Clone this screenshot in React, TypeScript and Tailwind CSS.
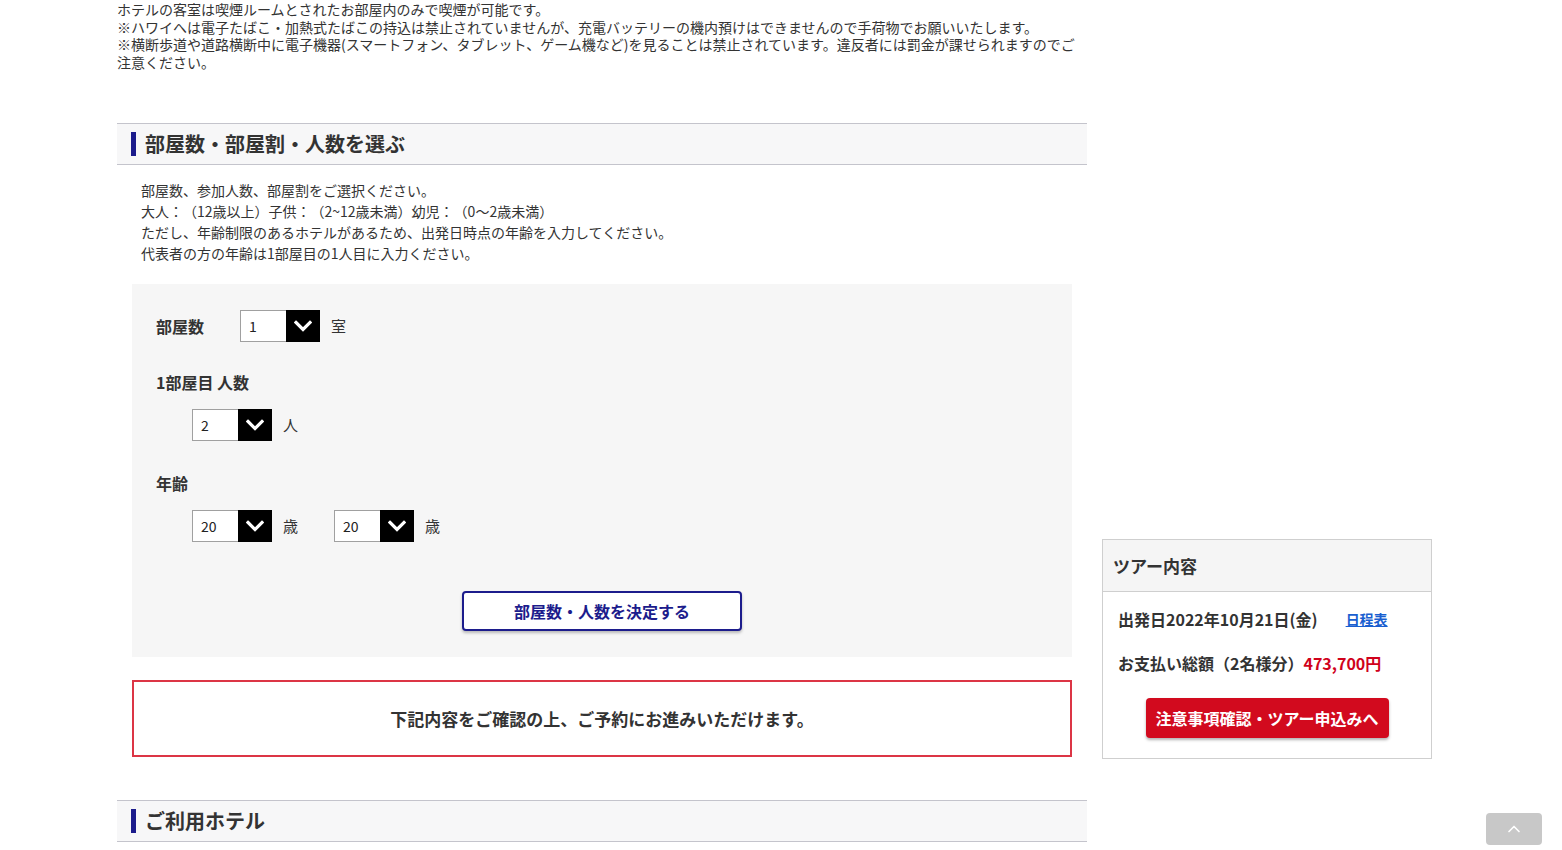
import { ChevronUp } from "lucide-react";

const font = { fontFamily: '"Noto Sans CJK JP", "Noto Sans", sans-serif' };

function Chevron() {
  return (
    <svg width="18" height="12" viewBox="0 0 18 12" fill="none">
      <path d="M2 2.5l7 7 7-7" stroke="#fff" strokeWidth="3.2" strokeLinecap="square" />
    </svg>
  );
}

function Select({ value }: { value: string }) {
  return (
    <div className="flex h-[32px] w-[80px]">
      <div className="flex flex-1 items-center border border-r-0 border-[#a0a0a0] bg-white pl-[8px] text-[14px] text-[#222]">
        {value}
      </div>
      <div className="flex w-[34px] items-center justify-center bg-black">
        <Chevron />
      </div>
    </div>
  );
}

function SectionHeader({ title }: { title: string }) {
  return (
    <div className="flex h-[42px] items-center border-y border-[#c4c4cc] bg-[#f7f7f8] pl-[14px]">
      <span className="mr-[9px] h-[24px] w-[5px] bg-[#1c1c8c]" />
      <h2 className="text-[20px] font-bold text-[#333]">{title}</h2>
    </div>
  );
}

export default function App() {
  return (
    <div
      style={font}
      className="relative h-[850px] overflow-hidden bg-white text-[#333] [text-spacing-trim:space-all]"
    >
      <div className="ml-[117px] flex items-start gap-[15px]">
        <main className="w-[970px]">
          <div className="pt-[1px] text-[14px] leading-[17.5px]">
            <p>ホテルの客室は喫煙ルームとされたお部屋内のみで喫煙が可能です。</p>
            <p>※ハワイへは電子たばこ・加熱式たばこの持込は禁止されていませんが、充電バッテリーの機内預けはできませんので手荷物でお願いいたします。</p>
            <p>※横断歩道や道路横断中に電子機器(スマートフォン、タブレット、ゲーム機など)を見ることは禁止されています。違反者には罰金が課せられますのでご注意ください。</p>
          </div>

          <div className="mt-[52px]">
            <SectionHeader title="部屋数・部屋割・人数を選ぶ" />
          </div>

          <div className="mt-[15px] pl-[24px] text-[14px] leading-[21px]">
            <p>部屋数、参加人数、部屋割をご選択ください。</p>
            <p>大人：（12歳以上）子供：（2~12歳未満）幼児：（0〜2歳未満）</p>
            <p>ただし、年齢制限のあるホテルがあるため、出発日時点の年齢を入力してください。</p>
            <p>代表者の方の年齢は1部屋目の1人目に入力ください。</p>
          </div>

          <div className="mx-[15px] mt-[20px] bg-[#f6f6f6] px-[24px] pb-[26px] pt-[26px]">
            <div className="flex items-center">
              <span className="w-[84px] text-[16px] font-bold">部屋数</span>
              <Select value="1" />
              <span className="ml-[11px] text-[15px]">室</span>
            </div>

            <p className="mt-[29px] text-[16px] font-bold leading-[22px]">1部屋目 人数</p>
            <div className="ml-[36px] mt-[16px] flex items-center">
              <Select value="2" />
              <span className="ml-[11px] text-[15px]">人</span>
            </div>

            <p className="mt-[31px] text-[16px] font-bold leading-[22px]">年齢</p>
            <div className="ml-[36px] mt-[16px] flex items-center gap-[11px]">
              <Select value="20" />
              <span className="mr-[25px] text-[15px]">歳</span>
              <Select value="20" />
              <span className="text-[15px]">歳</span>
            </div>

            <div className="mt-[49px] flex justify-center">
              <button className="h-[40px] w-[280px] rounded-[4px] border-2 border-[#1c1c8c] bg-white text-[16px] font-bold text-[#1c1c8c] shadow-[0_2px_3px_rgba(0,0,0,0.25)]">
                部屋数・人数を決定する
              </button>
            </div>
          </div>

          <div className="mx-[15px] mt-[23px] flex h-[77px] items-center justify-center border-2 border-[#dc3545] text-[17px] font-bold">
            下記内容をご確認の上、ご予約にお進みいただけます。
          </div>

          <div className="mt-[43px]">
            <SectionHeader title="ご利用ホテル" />
          </div>
        </main>

        <aside className="mt-[539px] w-[330px] border border-[#cfcfcf]">
          <div className="flex h-[52px] items-center border-b border-[#cfcfcf] bg-[#f5f5f5] pl-[10px] text-[17px] font-bold">
            ツアー内容
          </div>
          <div className="px-[15px] pb-[20px] pt-[15px]">
            <div className="flex items-center text-[16px] font-bold leading-[24px]">
              <span>出発日2022年10月21日(金)</span>
              <a className="ml-[28px] text-[14px] text-[#1a5fd0] underline">日程表</a>
            </div>
            <p className="mt-[20px] text-[16px] font-bold leading-[24px]">
              お支払い総額（2名様分）<span className="text-[#d0021b]">473,700円</span>
            </p>
            <div className="mt-[23px] flex justify-center">
              <button className="h-[40px] w-[243px] rounded-[4px] bg-[#d20a1e] text-[16px] font-bold text-white shadow-[0_2px_3px_rgba(0,0,0,0.3)]">
                注意事項確認・ツアー申込みへ
              </button>
            </div>
          </div>
        </aside>
      </div>

      <div className="absolute left-[1486px] top-[813px] flex h-[32px] w-[56px] items-center justify-center rounded-[4px] bg-[#c8c8c8]">
        <ChevronUp size={20} color="#fff" strokeWidth={2} />
      </div>
    </div>
  );
}
